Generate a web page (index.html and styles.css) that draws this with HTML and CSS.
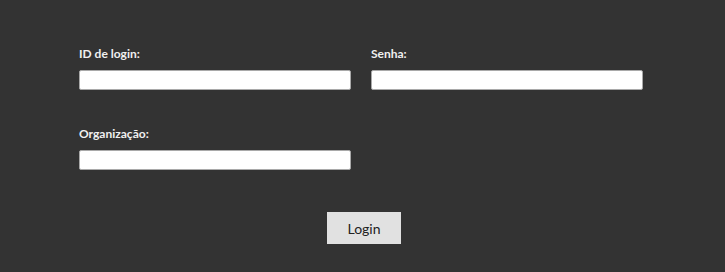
FILE: index.html
```html
<!DOCTYPE html>
<html>
<head>
<meta charset="utf-8">
<link rel="stylesheet" href="styles.css">
</head>
<body>
<form class="login">
  <div class="grid">
    <div class="field">
      <label class="lbl">ID de login:</label>
      <input class="inp" type="text">
    </div>
    <div class="field">
      <label class="lbl">Senha:</label>
      <input class="inp" type="password">
    </div>
    <div class="field">
      <label class="lbl">Organização:</label>
      <input class="inp" type="text">
    </div>
  </div>
  <div class="actions">
    <button class="btn" type="button">Login</button>
  </div>
</form>
</body>
</html>
```

FILE: styles.css
```css
html, body {
  margin: 0;
  padding: 0;
  background: #333333;
  height: 100%;
}
body {
  font-family: Lato, "Liberation Sans", sans-serif;
}
.login {
  padding: 46px 0 0 79px;
  width: 564px;
}
.grid {
  display: grid;
  grid-template-columns: 272px 272px;
  column-gap: 20px;
  row-gap: 36px;
}
.field {
  display: flex;
  flex-direction: column;
}
.lbl {
  color: #f0f0f0;
  font-size: 12px;
  font-weight: bold;
  line-height: 16px;
  height: 16px;
  margin-bottom: 8px;
}
.inp {
  box-sizing: border-box;
  width: 272px;
  height: 20px;
  margin: 0;
  border: 1px solid #a9a9a9;
  border-radius: 2px;
  background: #ffffff;
  padding: 0 4px;
}
.actions {
  display: flex;
  justify-content: center;
  padding-top: 42px;
  padding-left: 6px;
}
.btn {
  width: 74px;
  height: 32px;
  background: #e1e1e1;
  border: none;
  color: #222;
  font-family: Lato, "Liberation Sans", sans-serif;
  font-size: 14px;
  padding: 0;
}
```
